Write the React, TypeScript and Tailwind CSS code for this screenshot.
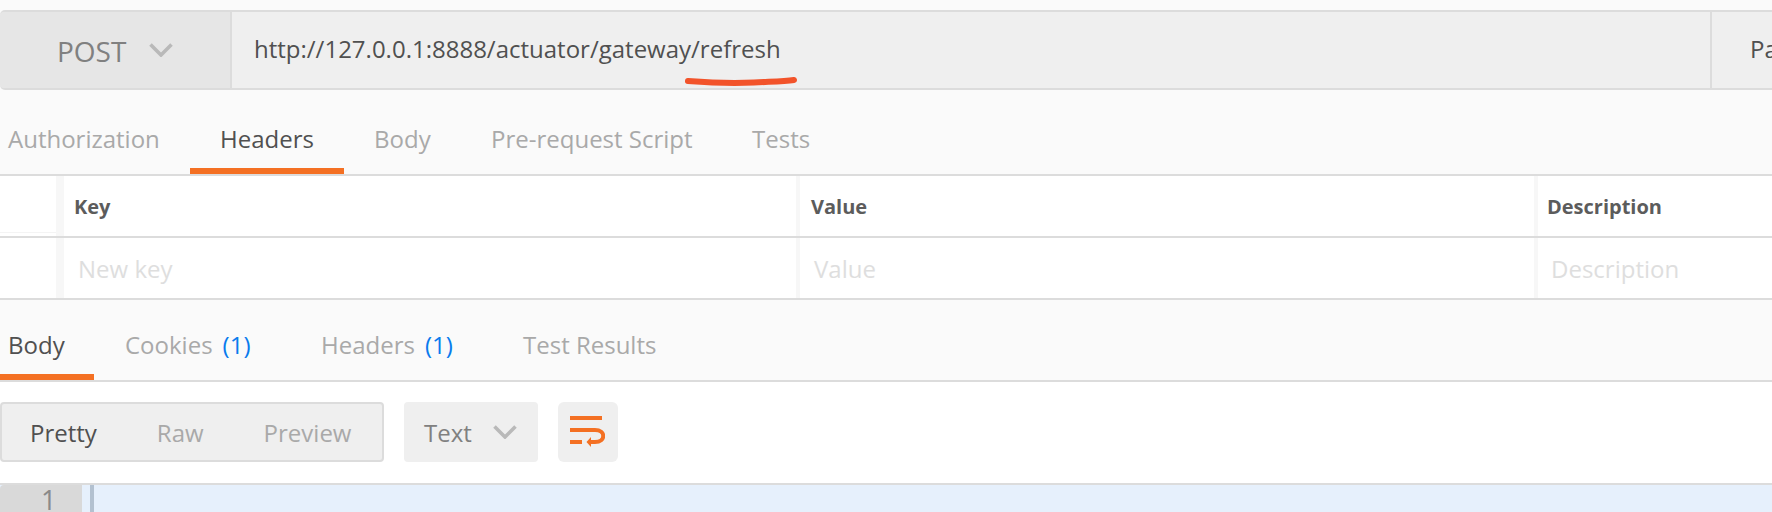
import React from "react";

function Chevron({ className }: { className: string }) {
  return (
    <svg viewBox="0 0 24 14" className={className} fill="none" stroke="currentColor" strokeWidth="3.6">
      <path d="M1.5 1.5 L12 12 L22.5 1.5" />
    </svg>
  );
}

function Tab({ label, active, count, width }: { label: string; active?: boolean; count?: string; width: string }) {
  return (
    <div className={`h-full flex items-center shrink-0 whitespace-nowrap ${width} ${active ? "border-b-[6px] border-[#f47023] text-[#505050] pt-[4px]" : "text-[#a9a9a9] pb-[2px]"}`}>
      {label}
      {count && <span className="text-[#097bed] ml-[10px]">{count}</span>}
    </div>
  );
}

function Row({ cells, bold }: { cells: string[]; bold?: boolean }) {
  const text = bold ? "font-bold text-[20px] text-[#5c5c5c] pt-[2px]" : "text-[24px] text-[#dedede] pt-[2px]";
  return (
    <div className="flex h-[62px] border-b-2 border-[#dcdcdc] bg-white">
      <div className={`w-[56px] shrink-0 bg-white ${bold ? "h-[57px] border-b border-[#f4f4f4]" : ""}`} />
      <div className={`w-[740px] shrink-0 border-l-[8px] border-[#f7f7f7] flex items-center ${bold ? "pl-[10px]" : "pl-[14px]"} ${text}`}>{cells[0]}</div>
      <div className={`w-[738px] shrink-0 border-l-[4px] border-[#f7f7f7] flex items-center ${bold ? "pl-[11px]" : "pl-[14px]"} ${text}`}>{cells[1]}</div>
      <div className={`flex-1 border-l-[4px] border-[#f7f7f7] flex items-center ${bold ? "pl-[9px]" : "pl-[13px]"} ${text}`}>{cells[2]}</div>
    </div>
  );
}

export default function App() {
  return (
    <div className="relative w-[1772px] h-[512px] overflow-hidden bg-[#fafafa] font-['Open_Sans',sans-serif]">
      <div className="h-[10px]" />
      <div className="flex h-[80px] border-y-2 border-[#dcdcdc] bg-[#efefef] rounded-l-[5px]">
        <div className="w-[232px] shrink-0 bg-[#e6e6e6] border-r-2 border-[#dcdcdc] rounded-l-[4px] flex items-center pl-[57px] gap-[23px] text-[#808080] text-[28px]">
          <span className="mt-[2px]">POST</span>
          <Chevron className="w-[24px] h-[14px] text-[#b9b9b9]" />
        </div>
        <div className="w-[1478px] shrink-0 pl-[22px] flex items-center pb-[2px] text-[#505050] text-[24px]">http://127.0.0.1:8888/actuator/gateway/refresh</div>
        <div className="flex-1 border-l-2 border-[#dcdcdc] pl-[38px] flex items-center pb-[2px] text-[#505050] text-[24px] whitespace-nowrap overflow-hidden">Params</div>
      </div>
      <svg className="absolute left-[684px] top-[76px] w-[114px] h-[11px]" viewBox="0 0 114 11" fill="none">
        <path d="M4 5 C 30 7, 50 7.5, 70 6.5 S 100 5.5, 110 4" stroke="#f2532a" strokeWidth="6" strokeLinecap="round" />
      </svg>

      <div className="flex h-[86px] border-b-2 border-[#dcdcdc] text-[24px] items-end">
        <div className="h-[68px] flex items-stretch w-full">
          <Tab label="Authorization" width="w-[190px] pl-[8px]" />
          <Tab label="Headers" active width="w-[154px] pl-[30px]" />
          <Tab label="Body" width="w-[147px] pl-[30px]" />
          <Tab label="Pre-request Script" width="w-[261px]" />
          <Tab label="Tests" width="w-[60px]" />
        </div>
      </div>

      <Row cells={["Key", "Value", "Description"]} bold />
      <Row cells={["New key", "Value", "Description"]} />

      <div className="flex h-[82px] border-b-2 border-[#dcdcdc] text-[24px] items-end">
        <div className="h-[62px] flex items-stretch">
          <Tab label="Body" active width="w-[94px] pl-[8px] !pt-0 !pb-[2px]" />
          <Tab label="Cookies" count="(1)" width="w-[227px] pl-[31px] !pb-[8px]" />
          <Tab label="Headers" count="(1)" width="w-[202px] !pb-[8px]" />
          <Tab label="Test Results" width="w-[200px] !pb-[8px]" />
        </div>
      </div>

      <div className="h-[101px] bg-white flex items-start pt-[20px] text-[24px]">
        <div className="w-[384px] h-[60px] rounded border-2 border-[#dcdcdc] bg-[#efefef] flex items-center pt-[2px]">
          <span className="ml-[28px] text-[#505050]">Pretty</span>
          <span className="ml-[60px] text-[#a9a9a9]">Raw</span>
          <span className="ml-[60px] text-[#a9a9a9]">Preview</span>
        </div>
        <div className="ml-[20px] w-[134px] h-[60px] rounded bg-[#efefef] flex items-center pl-[20px] text-[#808080]">
          <span className="mt-[2px]">Text</span>
          <Chevron className="ml-[21px] w-[24px] h-[14px] text-[#b9b9b9]" />
        </div>
        <div className="ml-[20px] w-[60px] h-[60px] rounded-md bg-[#efefef] pl-[12px] pt-[14px]">
          <svg viewBox="0 0 35 32" className="w-[35px] h-[32px]" fill="none" stroke="#f47023" strokeWidth="4">
            <path d="M0 2 H32" />
            <path d="M0 14 H25 C36 14 36 26 25 26 H19" />
            <path d="M0 26 H12" />
            <path d="M16.5 26 L21 21 V31 Z" fill="#f47023" stroke="none" />
          </svg>
        </div>
      </div>

      <div className="h-[29px] flex border-t-2 border-[#dcdcdc] bg-[#e6f0fc]">
        <div className="w-[82px] shrink-0 bg-[#d9d9d9] rounded-tl-[4px] text-[#8a8a8a] text-[27px] leading-[29px] pl-[41px]">1</div>
        <div className="w-[8px] shrink-0" />
        <div className="w-[4px] shrink-0 bg-[#b3c1d0]" />
      </div>
    </div>
  );
}
